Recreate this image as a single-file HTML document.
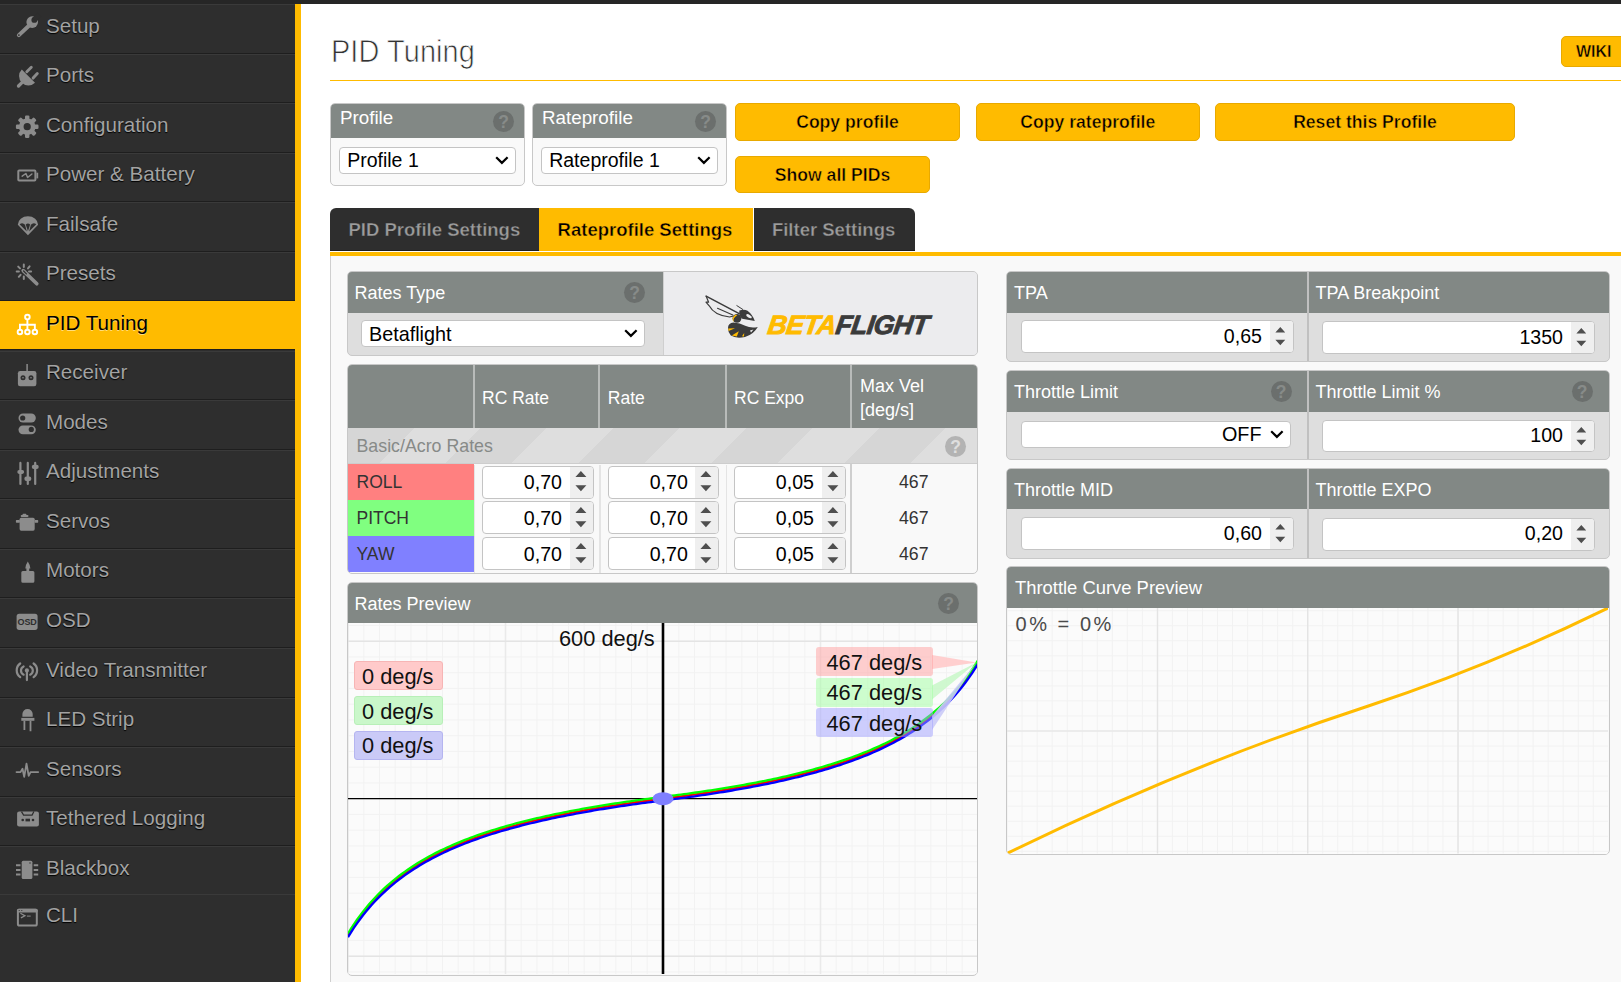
<!DOCTYPE html><html><head><meta charset="utf-8"><style>
*{box-sizing:border-box;margin:0;padding:0}
html,body{width:1621px;height:982px;overflow:hidden}
body{position:relative;background:#fff;font-family:"Liberation Sans",sans-serif;color:#333}
.a{position:absolute}
.side-item{position:absolute;left:0;width:295px;height:49.54px;border-top:1px solid #3a3a3a;border-bottom:1px solid #1e1e1e}
.side-item svg{position:absolute}
.box{position:absolute;border:1px solid #c8c8c8;border-radius:5px;background:#f9f9f9;overflow:hidden}
.hdr{position:absolute;left:0;right:0;top:0;background:#828885;color:#fff}
.help{position:absolute;width:21px;height:21px;border-radius:50%;background:#6b6f6d;color:#878b89;font-weight:bold;font-size:17.5px;line-height:23px;text-align:center}
.btn{position:absolute;background:#ffbb00;border:1px solid #e8a900;border-radius:5px;color:#000}
.sel-box{position:absolute;background:#fff;border:1px solid #c4c4c4;border-radius:4px;color:#000}
.tab{position:absolute;top:208px;height:42.7px}
.inp{position:absolute;background:#fff;border:1px solid #c4c4c4;border-radius:4px;height:32px;color:#000}
.sp{position:absolute;right:0;top:0;bottom:0;width:23px;background:#efefef;border-radius:0 3px 3px 0}
</style></head><body>
<div class="a" style="left:0;top:0;width:1621px;height:4px;background:#262626"></div>
<div class="a" style="left:0;top:4px;width:295px;height:978px;background:#2e2e2e"></div>
<div class="a" style="left:295px;top:4px;width:6px;height:978px;background:#ffbb00"></div>
<div class="side-item" style="top:4.00px"><svg style="left:16.4px;top:11.40px;overflow:visible" width="22" height="22" viewBox="0 0 22 22"><path d="M2.9 19.1 L14.5 8.2" stroke="#8c8c8c" stroke-width="4" stroke-linecap="round"/><circle cx="2.9" cy="19.1" r="0.9" fill="#2e2e2e"/><circle cx="16.2" cy="6.1" r="5.8" fill="#8c8c8c"/><circle cx="18.3" cy="3.9" r="2.9" fill="#2e2e2e"/><path d="M18.3 3.9 L23.5 -1.3" stroke="#2e2e2e" stroke-width="5.2"/></svg><div class="a" style="left:46px;top:10.50px;font-size:20.6px;line-height:20.6px;white-space:nowrap;color:#a3a3a3;text-shadow:0 1px 1px #000">Setup</div></div>
<div class="side-item" style="top:53.54px"><svg style="left:16.8px;top:11.76px;overflow:visible" width="22" height="22" viewBox="0 0 22 22"><path d="M4.8 3.5 L18 16.7 A9.3 9.3 0 0 1 4.8 3.5 Z" fill="#8c8c8c"/><path d="M9.8 5.8 L14.3 1.3 M16.1 12.1 L20.3 7.6" stroke="#8c8c8c" stroke-width="2.9" stroke-linecap="round"/><path d="M5.2 16.3 L1.5 20" stroke="#8c8c8c" stroke-width="3.3" stroke-linecap="round"/></svg><div class="a" style="left:46px;top:10.50px;font-size:20.6px;line-height:20.6px;white-space:nowrap;color:#a3a3a3;text-shadow:0 1px 1px #000">Ports</div></div>
<div class="side-item" style="top:103.08px"><svg style="left:16.2px;top:11.62px;overflow:visible" width="22" height="22" viewBox="0 0 22 22"><g fill="#8c8c8c"><circle cx="11.2" cy="10.7" r="8.3"/><rect x="9.0" y="-0.6" width="4.4" height="5" rx="1.2" transform="rotate(0 11.2 10.7)"/><rect x="9.0" y="-0.6" width="4.4" height="5" rx="1.2" transform="rotate(45 11.2 10.7)"/><rect x="9.0" y="-0.6" width="4.4" height="5" rx="1.2" transform="rotate(90 11.2 10.7)"/><rect x="9.0" y="-0.6" width="4.4" height="5" rx="1.2" transform="rotate(135 11.2 10.7)"/><rect x="9.0" y="-0.6" width="4.4" height="5" rx="1.2" transform="rotate(180 11.2 10.7)"/><rect x="9.0" y="-0.6" width="4.4" height="5" rx="1.2" transform="rotate(225 11.2 10.7)"/><rect x="9.0" y="-0.6" width="4.4" height="5" rx="1.2" transform="rotate(270 11.2 10.7)"/><rect x="9.0" y="-0.6" width="4.4" height="5" rx="1.2" transform="rotate(315 11.2 10.7)"/></g><circle cx="11.2" cy="10.7" r="3.6" fill="#2e2e2e"/></svg><div class="a" style="left:46px;top:10.50px;font-size:20.6px;line-height:20.6px;white-space:nowrap;color:#a3a3a3;text-shadow:0 1px 1px #000">Configuration</div></div>
<div class="side-item" style="top:152.62px"><svg style="left:16.8px;top:11.68px;overflow:visible" width="22" height="22" viewBox="0 0 22 22"><rect x="1.3" y="5.5" width="17.1" height="10" rx="0.8" stroke="#8c8c8c" stroke-width="2" fill="none"/><rect x="19.4" y="7.7" width="1.8" height="5.7" fill="#8c8c8c"/><path d="M5.2 11.2 L8.9 8.5 L10.6 12.5 L14.9 9" stroke="#8c8c8c" stroke-width="1.5" fill="none" stroke-linejoin="round" stroke-linecap="round"/></svg><div class="a" style="left:46px;top:10.50px;font-size:20.6px;line-height:20.6px;white-space:nowrap;color:#a3a3a3;text-shadow:0 1px 1px #000">Power &amp; Battery</div></div>
<div class="side-item" style="top:202.16px"><svg style="left:16.6px;top:11.44px;overflow:visible" width="22" height="22" viewBox="0 0 22 22"><path d="M0.8 9.7 A10.15 8.5 0 0 1 21.1 9.7 L10.95 20.2 Z" fill="#8c8c8c"/><g fill="#2e2e2e"><path d="M2.6 9.2 Q5.7 7.0 8.0 9.8 L9.8 16.6 Z"/><path d="M8.8 9.4 Q10.95 7.4 13.1 9.4 L10.95 16.2 Z"/><path d="M19.3 9.2 Q16.2 7.0 13.9 9.8 L12.1 16.6 Z"/></g></svg><div class="a" style="left:46px;top:10.50px;font-size:20.6px;line-height:20.6px;white-space:nowrap;color:#a3a3a3;text-shadow:0 1px 1px #000">Failsafe</div></div>
<div class="side-item" style="top:251.70px"><svg style="left:16.0px;top:11.60px;overflow:visible" width="22" height="22" viewBox="0 0 22 22"><path d="M7.2 6.6 L20.8 19.8" stroke="#8c8c8c" stroke-width="3.6" stroke-linecap="round"/><path d="M7.6 7.0 L10.4 9.8" stroke="#2e2e2e" stroke-width="1.2" stroke-linecap="round"/><g stroke="#8c8c8c" stroke-width="2" stroke-linecap="round"><path d="M7.8 0.6 V2.9 M7.8 12.6 V14.9 M0.7 7.5 H2.9 M13.0 7.5 H15.1 M2.2 2.6 L4.0 4.4 M13.6 2.4 L12.0 4.4 M2.8 12.8 L4.6 10.8"/></g></svg><div class="a" style="left:46px;top:10.50px;font-size:20.6px;line-height:20.6px;white-space:nowrap;color:#a3a3a3;text-shadow:0 1px 1px #000">Presets</div></div>
<div class="side-item" style="top:301.24px;background:#ffbb00;border-top-color:#ffbb00;border-bottom-color:#1e1e1e;height:48.7px"><svg style="left:16.9px;top:10.76px;overflow:visible" width="22" height="22" viewBox="0 0 22 22"><g stroke="#fff" stroke-width="1.9" fill="none"><circle cx="10.4" cy="4.1" r="2.3"/><path d="M10.4 6.4 V16.7 M2.95 16.7 V11.7 H17.85 V16.7"/><circle cx="2.95" cy="19" r="2.3"/><circle cx="10.4" cy="19" r="2.3"/><circle cx="17.85" cy="19" r="2.3"/></g></svg><div class="a" style="left:46px;top:10.50px;font-size:20.6px;line-height:20.6px;white-space:nowrap;color:#000;text-shadow:0 1px 0 rgba(255,255,255,.5)">PID Tuning</div></div>
<div class="side-item" style="top:350.78px"><svg style="left:16.4px;top:11.82px;overflow:visible" width="22" height="22" viewBox="0 0 22 22"><path d="M11.1 0 V7" stroke="#8c8c8c" stroke-width="1.5"/><rect x="1.9" y="7" width="18.5" height="15.2" rx="2.2" fill="#8c8c8c"/><circle cx="7" cy="13.8" r="2.5" fill="#2e2e2e"/><circle cx="15" cy="13.8" r="2.5" fill="#2e2e2e"/><circle cx="7" cy="13.8" r="0.8" fill="#8c8c8c"/><circle cx="15" cy="13.8" r="0.8" fill="#8c8c8c"/></svg><div class="a" style="left:46px;top:10.50px;font-size:20.6px;line-height:20.6px;white-space:nowrap;color:#a3a3a3;text-shadow:0 1px 1px #000">Receiver</div></div>
<div class="side-item" style="top:400.32px"><svg style="left:16.4px;top:9.28px;overflow:visible" width="22" height="22" viewBox="0 0 22 22"><rect x="2.5" y="2.4" width="17.3" height="9.1" rx="4.55" fill="#8c8c8c"/><circle cx="6.7" cy="7" r="2.6" fill="#2e2e2e"/><rect x="2.5" y="14.4" width="17.3" height="8.8" rx="4.4" fill="#8c8c8c"/><circle cx="15.3" cy="18.4" r="2.6" fill="#2e2e2e"/></svg><div class="a" style="left:46px;top:10.50px;font-size:20.6px;line-height:20.6px;white-space:nowrap;color:#a3a3a3;text-shadow:0 1px 1px #000">Modes</div></div>
<div class="side-item" style="top:449.86px"><svg style="left:16.6px;top:10.14px;overflow:visible" width="22" height="22" viewBox="0 0 22 22"><g stroke="#8c8c8c" stroke-width="2.2" stroke-linecap="round"><path d="M3.4 1.9 V22.9 M10.8 1.9 V22.9 M18.2 1.9 V22.9"/></g><g fill="#8c8c8c"><rect x="0.3" y="9.1" width="6.8" height="3.8" rx="1.8"/><rect x="7.4" y="15.4" width="6.9" height="4.6" rx="2"/><rect x="14.8" y="3.7" width="6.9" height="4.3" rx="2"/></g></svg><div class="a" style="left:46px;top:10.50px;font-size:20.6px;line-height:20.6px;white-space:nowrap;color:#a3a3a3;text-shadow:0 1px 1px #000">Adjustments</div></div>
<div class="side-item" style="top:499.40px"><svg style="left:16.4px;top:11.80px;overflow:visible" width="22" height="22" viewBox="0 0 22 22"><g fill="#8c8c8c"><rect x="6.5" y="1.7" width="3.9" height="1.8" rx="0.8"/><rect x="4.7" y="3.1" width="7.8" height="1.9" rx="0.9"/><rect x="3.6" y="5.7" width="15.1" height="13" rx="1.6"/><rect x="-0.1" y="8.1" width="4" height="2.6" rx="0.6"/><rect x="18.5" y="8.1" width="3.7" height="2.6" rx="0.6"/></g></svg><div class="a" style="left:46px;top:10.50px;font-size:20.6px;line-height:20.6px;white-space:nowrap;color:#a3a3a3;text-shadow:0 1px 1px #000">Servos</div></div>
<div class="side-item" style="top:548.94px"><svg style="left:20.6px;top:12.16px;overflow:visible" width="22" height="22" viewBox="0 0 22 22"><path d="M6.8 -0.4 Q4.6 2.8 4.3 6.5 H5.4 V9 H1.8 Q0.3 9 0.3 10.5 V19.2 Q0.3 20.7 1.8 20.7 H11.9 Q13.4 20.7 13.4 19.2 V10.5 Q13.4 9 11.9 9 H8.2 V6.5 H9.4 Q9 2.8 6.8 -0.4 Z" fill="#8c8c8c"/></svg><div class="a" style="left:46px;top:10.50px;font-size:20.6px;line-height:20.6px;white-space:nowrap;color:#a3a3a3;text-shadow:0 1px 1px #000">Motors</div></div>
<div class="side-item" style="top:598.48px"><svg style="left:16.4px;top:11.62px;overflow:visible" width="22" height="22" viewBox="0 0 22 22"><rect x="0.6" y="2.8" width="21" height="16.1" rx="2.6" fill="#8c8c8c"/><text x="11.05" y="14.1" font-family="Liberation Sans" font-weight="bold" font-size="9" letter-spacing="-0.2" fill="#2e2e2e" text-anchor="middle">OSD</text></svg><div class="a" style="left:46px;top:10.50px;font-size:20.6px;line-height:20.6px;white-space:nowrap;color:#a3a3a3;text-shadow:0 1px 1px #000">OSD</div></div>
<div class="side-item" style="top:648.02px"><svg style="left:16.4px;top:12.88px;overflow:visible" width="22" height="22" viewBox="0 0 22 22"><g stroke="#8c8c8c" stroke-width="2.2" fill="none" stroke-linecap="round"><path d="M10.9 8.4 V18.1"/><path d="M7.6 4.4 A4.6 4.6 0 0 0 7.6 12.7 M14.2 4.4 A4.6 4.6 0 0 1 14.2 12.7"/><path d="M4.2 1.5 A8.45 8.45 0 0 0 4.2 15.2 M17.6 1.5 A8.45 8.45 0 0 1 17.6 15.2"/></g><circle cx="10.9" cy="8.4" r="2.1" fill="#8c8c8c"/></svg><div class="a" style="left:46px;top:10.50px;font-size:20.6px;line-height:20.6px;white-space:nowrap;color:#a3a3a3;text-shadow:0 1px 1px #000">Video Transmitter</div></div>
<div class="side-item" style="top:697.56px"><svg style="left:20.6px;top:9.54px;overflow:visible" width="22" height="22" viewBox="0 0 22 22"><path d="M1.4 8.8 V6.1 A5.15 5.1 0 0 1 11.7 6.1 V8.8 Z" fill="#8c8c8c"/><rect x="0.3" y="9.9" width="13.1" height="2.9" fill="#8c8c8c"/><path d="M3.4 12.8 V21.9 M9.5 12.8 V23.3" stroke="#8c8c8c" stroke-width="1.8"/></svg><div class="a" style="left:46px;top:10.50px;font-size:20.6px;line-height:20.6px;white-space:nowrap;color:#a3a3a3;text-shadow:0 1px 1px #000">LED Strip</div></div>
<div class="side-item" style="top:747.10px"><svg style="left:16.4px;top:15.40px;overflow:visible" width="22" height="22" viewBox="0 0 22 22"><path d="M0.5 9.1 H4.5 L6.5 5.8 L8.2 13.8 L10.5 0.6 L12.7 12.9 L14.5 9.1 H22.2" stroke="#8c8c8c" stroke-width="1.8" fill="none" stroke-linejoin="round" stroke-linecap="round"/></svg><div class="a" style="left:46px;top:10.50px;font-size:20.6px;line-height:20.6px;white-space:nowrap;color:#a3a3a3;text-shadow:0 1px 1px #000">Sensors</div></div>
<div class="side-item" style="top:796.64px"><svg style="left:16.6px;top:13.66px;overflow:visible" width="22" height="22" viewBox="0 0 22 22"><rect x="0.1" y="0.6" width="21.8" height="15" rx="2" fill="#8c8c8c"/><path d="M4.5 0.6 L6.6 4.1 H15.1 L16.9 0.6" stroke="#2e2e2e" stroke-width="1.2" fill="none"/><g fill="#2e2e2e"><circle cx="5.7" cy="9" r="1.3"/><circle cx="16" cy="9" r="1.3"/><rect x="8.5" y="7.7" width="4.5" height="2.7"/></g></svg><div class="a" style="left:46px;top:10.50px;font-size:20.6px;line-height:20.6px;white-space:nowrap;color:#a3a3a3;text-shadow:0 1px 1px #000">Tethered Logging</div></div>
<div class="side-item" style="top:846.18px;border-bottom:none"><svg style="left:16.4px;top:12.42px;overflow:visible" width="22" height="22" viewBox="0 0 22 22"><rect x="5.7" y="0.7" width="10.7" height="18.4" rx="1.5" fill="#8c8c8c"/><circle cx="14" cy="3" r="0.7" fill="#2e2e2e"/><g stroke="#8c8c8c" stroke-width="2"><path d="M0 5.3 H4.5 M0 10 H4.5 M0 14.4 H4.5 M17.7 5.3 H22.2 M17.7 10 H22.2 M17.7 14.4 H22.2"/></g></svg><div class="a" style="left:46px;top:10.50px;font-size:20.6px;line-height:20.6px;white-space:nowrap;color:#a3a3a3;text-shadow:0 1px 1px #000">Blackbox</div></div>
<div class="side-item" style="top:894.00px;border-bottom:none;height:88px"><svg style="left:16.2px;top:12.90px;overflow:visible" width="22" height="22" viewBox="0 0 22 22"><rect x="1.9" y="1.7" width="18.9" height="15.9" rx="1.6" stroke="#8c8c8c" stroke-width="2" fill="none"/><rect x="0.9" y="0.7" width="20.9" height="3.7" rx="1.6" fill="#8c8c8c"/><circle cx="3.2" cy="2.5" r="0.6" fill="#2e2e2e"/><circle cx="5.8" cy="2.5" r="0.6" fill="#2e2e2e"/><path d="M4.4 5.2 L8.9 7.8 L4.9 9.8" stroke="#8c8c8c" stroke-width="1.3" fill="none"/><path d="M10.9 8.1 H14.7" stroke="#8c8c8c" stroke-width="1"/></svg><div class="a" style="left:46px;top:10.20px;font-size:20.6px;line-height:20.6px;white-space:nowrap;color:#a3a3a3;text-shadow:0 1px 1px #000">CLI</div></div>
<div class="a" style="left:330.8px;top:36.05px;font-size:31.6px;line-height:31.6px;white-space:nowrap;color:#333;-webkit-text-stroke:0.75px #fff;transform:scaleX(0.915);transform-origin:0 0;letter-spacing:0.1px">PID Tuning</div>
<div class="a" style="left:330px;top:80px;width:1291px;height:1px;background:#ffbb00"></div>
<div class="btn" style="left:1561px;top:36px;width:80px;height:30.5px"><div class="a" style="left:14px;top:6.80px;font-size:16px;line-height:16px;white-space:nowrap;font-weight:bold;-webkit-text-stroke:0.4px #ffbb00">WIKI</div></div>
<div class="box" style="left:330px;top:103px;width:195px;height:83px"><div class="hdr" style="height:34px"><div class="a" style="left:9px;top:5.00px;font-size:18.8px;line-height:18.8px;white-space:nowrap;">Profile</div><div class="help" style="left:162px;top:6.6px">?</div></div><div class="sel-box" style="left:8.2px;top:43.2px;width:176.5px;height:26.4px"><div class="a" style="left:7px;top:2.50px;font-size:19.5px;line-height:19.5px;white-space:nowrap;">Profile 1</div><svg class="a" style="left:154.9px;top:7.8px" width="14" height="9" viewBox="0 0 14 9"><path d="M1.2 1.2 L6.9 6.9 L12.6 1.2" stroke="#000" stroke-width="2.2" fill="none"/></svg></div></div>
<div class="box" style="left:532px;top:103px;width:195px;height:83px"><div class="hdr" style="height:34px"><div class="a" style="left:9px;top:5.00px;font-size:18.8px;line-height:18.8px;white-space:nowrap;">Rateprofile</div><div class="help" style="left:162px;top:6.6px">?</div></div><div class="sel-box" style="left:8.2px;top:43.2px;width:176.5px;height:26.4px"><div class="a" style="left:7px;top:2.50px;font-size:19.5px;line-height:19.5px;white-space:nowrap;">Rateprofile 1</div><svg class="a" style="left:154.9px;top:7.8px" width="14" height="9" viewBox="0 0 14 9"><path d="M1.2 1.2 L6.9 6.9 L12.6 1.2" stroke="#000" stroke-width="2.2" fill="none"/></svg></div></div>
<div class="btn" style="left:735px;top:103px;width:225px;height:38px"><div class="a" style="left:0;right:0;top:9.55px;font-size:17.6px;line-height:17.6px;text-align:center;font-weight:bold;white-space:nowrap;-webkit-text-stroke:0.45px #ffbb00">Copy profile</div></div>
<div class="btn" style="left:975.5px;top:103px;width:224.5px;height:38px"><div class="a" style="left:0;right:0;top:9.55px;font-size:17.6px;line-height:17.6px;text-align:center;font-weight:bold;white-space:nowrap;-webkit-text-stroke:0.45px #ffbb00">Copy rateprofile</div></div>
<div class="btn" style="left:1215px;top:103px;width:300px;height:38px"><div class="a" style="left:0;right:0;top:9.55px;font-size:17.6px;line-height:17.6px;text-align:center;font-weight:bold;white-space:nowrap;-webkit-text-stroke:0.45px #ffbb00">Reset this Profile</div></div>
<div class="btn" style="left:735px;top:156px;width:195px;height:37px"><div class="a" style="left:0;right:0;top:9.50px;font-size:17.6px;line-height:17.6px;text-align:center;font-weight:bold;white-space:nowrap;-webkit-text-stroke:0.45px #ffbb00">Show all PIDs</div></div>
<div class="tab" style="left:330px;width:208.5px;background:#2e2e2e;border-radius:6px 0 0 0;border-bottom:1px solid #1e1e1e"><div class="a" style="left:18.5px;top:12.85px;font-size:18.5px;line-height:18.5px;white-space:nowrap;font-weight:bold;color:#9c9c9c;-webkit-text-stroke:0.35px #2e2e2e">PID Profile Settings</div></div>
<div class="tab" style="left:539px;width:213.5px;background:#ffbb00"><div class="a" style="left:18.6px;top:12.85px;font-size:18.5px;line-height:18.5px;white-space:nowrap;font-weight:bold;color:#000;-webkit-text-stroke:0.4px #ffbb00">Rateprofile Settings</div></div>
<div class="tab" style="left:753.5px;width:161.3px;background:#2e2e2e;border-radius:0 6px 0 0;border-bottom:1px solid #1e1e1e"><div class="a" style="left:18.4px;top:12.85px;font-size:18.5px;line-height:18.5px;white-space:nowrap;font-weight:bold;color:#9c9c9c;-webkit-text-stroke:0.35px #2e2e2e">Filter Settings</div></div>
<div class="a" style="left:330px;top:252px;width:1291px;height:4px;background:#ffbb00"></div>
<div class="a" style="left:330px;top:256px;width:1291px;height:726px;background:#f9f9f9;border-left:1px solid #cfcfcf"></div>
<div class="box" style="left:346.5px;top:271px;width:631.5px;height:85px;background:#dedede"><div class="hdr" style="width:315px;height:41px"><div class="a" style="left:7px;top:11.50px;font-size:18px;line-height:18px;white-space:nowrap;">Rates Type</div><div class="help" style="left:276.5px;top:10px">?</div></div><div class="sel-box" style="left:13.5px;top:48.2px;width:284px;height:27px"><div class="a" style="left:7px;top:3.40px;font-size:19.8px;line-height:19.8px;white-space:nowrap;">Betaflight</div><svg class="a" style="left:262px;top:7.9px" width="14" height="9" viewBox="0 0 14 9"><path d="M1.2 1.2 L6.9 6.9 L12.6 1.2" stroke="#000" stroke-width="2.2" fill="none"/></svg></div><div class="a" style="left:315px;top:0;width:316px;height:85px;background:#ececee;border-left:1px solid #cfcfcf"></div></div>
<svg class="a" style="left:700px;top:290px" width="60" height="52" viewBox="0 0 60 52"><path d="M6.1 6.1 L39.2 23.6" stroke="#3b3b3b" stroke-width="1.5" stroke-linecap="round"/><path d="M6.1 6.1 L8.6 12.2 L6 12.2 L9.2 15.8 Q14.3 25.5 29.6 27 L33.5 26" stroke="#3b3b3b" stroke-width="1.2" fill="none" stroke-linejoin="round"/><path d="M17.5 18.3 L32.8 24.9" stroke="#3b3b3b" stroke-width="1.1" stroke-linecap="round"/><path d="M36.5 15.4 L43 19.6" stroke="#3b3b3b" stroke-width="1" /><path d="M39.4 20.6 Q44 19 47.5 20.8 Q52.5 24.5 54.8 30.9 Q47 29.8 42.2 28.8 Q38.6 26 39.4 20.6 Z" fill="#3b3b3b"/><ellipse cx="49" cy="26.2" rx="3.1" ry="1.5" transform="rotate(28 49 26.2)" fill="#ececee"/><circle cx="37" cy="28.3" r="4.4" fill="#3b3b3b"/><path d="M35.6 24.4 Q30.6 27.5 33.6 32.2 Q32.6 27.8 37.2 25.2 Z" fill="#ffbb00"/><path d="M28 38 Q28 33 33.5 32.5 Q40 33 45.2 35.8 Q51 38.6 57.8 37 Q53.5 44.5 45 47 Q36 48.8 30.8 45.6 Q28 42.4 28 38 Z" fill="#3b3b3b"/><path d="M28.2 38.6 L35 38.2 L28.6 41 Z M31.8 45.6 L38.8 41.2 L36.8 46.6 Z M42 46.2 L44.2 43 L44 46.4 Z" fill="#ffbb00"/><path d="M50 40.5 L53.5 39.6 L51 42.5 Z" fill="#ececee"/></svg>
<div class="a" style="left:766px;top:311.70px;font-size:26.6px;line-height:26.6px;white-space:nowrap;font-weight:bold;font-style:italic;letter-spacing:-0.6px;transform:skewX(-8deg);transform-origin:0 100%"><span style="color:#ffbb00;-webkit-text-stroke:0.9px #ffbb00">BETA</span><span style="color:#3b3b3b;-webkit-text-stroke:0.9px #3b3b3b">FLIGHT</span></div>
<div class="box" style="left:346.5px;top:364px;width:631.5px;height:210px;background:#f9f9f9"><div class="hdr" style="height:63px"></div><div class="a" style="left:125.0px;top:0;width:2px;height:63px;background:#b8bbb9"></div><div class="a" style="left:134.5px;top:24.55px;font-size:17.5px;line-height:17.5px;white-space:nowrap;color:#fff">RC Rate</div><div class="a" style="left:250.79999999999995px;top:0;width:2px;height:63px;background:#b8bbb9"></div><div class="a" style="left:260.29999999999995px;top:24.55px;font-size:17.5px;line-height:17.5px;white-space:nowrap;color:#fff">Rate</div><div class="a" style="left:377.0px;top:0;width:2px;height:63px;background:#b8bbb9"></div><div class="a" style="left:386.5px;top:24.55px;font-size:17.5px;line-height:17.5px;white-space:nowrap;color:#fff">RC Expo</div><div class="a" style="left:502.5px;top:0;width:2px;height:63px;background:#b8bbb9"></div><div class="a" style="left:502.5px;top:99px;width:1.6px;height:110px;background:#cfcfcf"></div><div class="a" style="left:512.5px;top:11.50px;font-size:18px;line-height:18px;white-space:nowrap;color:#fff">Max Vel</div><div class="a" style="left:512.5px;top:35.60px;font-size:18px;line-height:18px;white-space:nowrap;color:#fff">[deg/s]</div><div class="a" style="left:0;top:98px;width:631px;height:1px;background:#cdcdcd"></div><div class="a" style="left:0;top:63px;width:631px;height:35px;background:repeating-linear-gradient(135deg,#d6d6d6 0 46.8px,#dedede 46.8px 93.9px);"></div><div class="a" style="left:9px;top:72.60px;font-size:17.8px;line-height:17.8px;white-space:nowrap;color:#878a88">Basic/Acro Rates</div><div class="help" style="left:597.5px;top:71px;background:#b3b3b3;color:#dedede">?</div><div class="a" style="left:0;top:99.0px;width:126px;height:36px;background:#ff8080"></div><div class="a" style="left:9px;top:108.55px;font-size:17.5px;line-height:17.5px;white-space:nowrap;color:#333">ROLL</div><div class="inp" style="left:134.5px;top:100.5px;width:111.5px;height:33px"><div class="a" style="right:30.5px;top:6.10px;font-size:19.6px;line-height:19.6px;white-space:nowrap;">0,70</div><div class="sp"><svg class="a" style="left:5px;top:4.6px;overflow:visible" width="12" height="21" viewBox="0 0 12 21"><g transform="scale(1.0)"><path d="M0.4 6.1 L5.9 0 L11.4 6.1 Z M0.4 14.2 L5.9 20.3 L11.4 14.2 Z" fill="#4f4f4f"/></g></svg></div></div><div class="inp" style="left:260.29999999999995px;top:100.5px;width:111.5px;height:33px"><div class="a" style="right:30.5px;top:6.10px;font-size:19.6px;line-height:19.6px;white-space:nowrap;">0,70</div><div class="sp"><svg class="a" style="left:5px;top:4.6px;overflow:visible" width="12" height="21" viewBox="0 0 12 21"><g transform="scale(1.0)"><path d="M0.4 6.1 L5.9 0 L11.4 6.1 Z M0.4 14.2 L5.9 20.3 L11.4 14.2 Z" fill="#4f4f4f"/></g></svg></div></div><div class="inp" style="left:386.5px;top:100.5px;width:111.5px;height:33px"><div class="a" style="right:30.5px;top:6.10px;font-size:19.6px;line-height:19.6px;white-space:nowrap;">0,05</div><div class="sp"><svg class="a" style="left:5px;top:4.6px;overflow:visible" width="12" height="21" viewBox="0 0 12 21"><g transform="scale(1.0)"><path d="M0.4 6.1 L5.9 0 L11.4 6.1 Z M0.4 14.2 L5.9 20.3 L11.4 14.2 Z" fill="#4f4f4f"/></g></svg></div></div><div class="a" style="left:551.5px;top:108.65px;font-size:17.7px;line-height:17.7px;white-space:nowrap;color:#333">467</div><div class="a" style="left:0;top:134.95px;width:126px;height:36px;background:#80ff80"></div><div class="a" style="left:9px;top:144.55px;font-size:17.5px;line-height:17.5px;white-space:nowrap;color:#333">PITCH</div><div class="inp" style="left:134.5px;top:136.45px;width:111.5px;height:33px"><div class="a" style="right:30.5px;top:6.15px;font-size:19.6px;line-height:19.6px;white-space:nowrap;">0,70</div><div class="sp"><svg class="a" style="left:5px;top:4.6px;overflow:visible" width="12" height="21" viewBox="0 0 12 21"><g transform="scale(1.0)"><path d="M0.4 6.1 L5.9 0 L11.4 6.1 Z M0.4 14.2 L5.9 20.3 L11.4 14.2 Z" fill="#4f4f4f"/></g></svg></div></div><div class="inp" style="left:260.29999999999995px;top:136.45px;width:111.5px;height:33px"><div class="a" style="right:30.5px;top:6.15px;font-size:19.6px;line-height:19.6px;white-space:nowrap;">0,70</div><div class="sp"><svg class="a" style="left:5px;top:4.6px;overflow:visible" width="12" height="21" viewBox="0 0 12 21"><g transform="scale(1.0)"><path d="M0.4 6.1 L5.9 0 L11.4 6.1 Z M0.4 14.2 L5.9 20.3 L11.4 14.2 Z" fill="#4f4f4f"/></g></svg></div></div><div class="inp" style="left:386.5px;top:136.45px;width:111.5px;height:33px"><div class="a" style="right:30.5px;top:6.15px;font-size:19.6px;line-height:19.6px;white-space:nowrap;">0,05</div><div class="sp"><svg class="a" style="left:5px;top:4.6px;overflow:visible" width="12" height="21" viewBox="0 0 12 21"><g transform="scale(1.0)"><path d="M0.4 6.1 L5.9 0 L11.4 6.1 Z M0.4 14.2 L5.9 20.3 L11.4 14.2 Z" fill="#4f4f4f"/></g></svg></div></div><div class="a" style="left:551.5px;top:144.65px;font-size:17.7px;line-height:17.7px;white-space:nowrap;color:#333">467</div><div class="a" style="left:0;top:170.9px;width:126px;height:36px;background:#8080ff"></div><div class="a" style="left:9px;top:180.55px;font-size:17.5px;line-height:17.5px;white-space:nowrap;color:#333">YAW</div><div class="inp" style="left:134.5px;top:172.4px;width:111.5px;height:33px"><div class="a" style="right:30.5px;top:6.20px;font-size:19.6px;line-height:19.6px;white-space:nowrap;">0,70</div><div class="sp"><svg class="a" style="left:5px;top:4.6px;overflow:visible" width="12" height="21" viewBox="0 0 12 21"><g transform="scale(1.0)"><path d="M0.4 6.1 L5.9 0 L11.4 6.1 Z M0.4 14.2 L5.9 20.3 L11.4 14.2 Z" fill="#4f4f4f"/></g></svg></div></div><div class="inp" style="left:260.29999999999995px;top:172.4px;width:111.5px;height:33px"><div class="a" style="right:30.5px;top:6.20px;font-size:19.6px;line-height:19.6px;white-space:nowrap;">0,70</div><div class="sp"><svg class="a" style="left:5px;top:4.6px;overflow:visible" width="12" height="21" viewBox="0 0 12 21"><g transform="scale(1.0)"><path d="M0.4 6.1 L5.9 0 L11.4 6.1 Z M0.4 14.2 L5.9 20.3 L11.4 14.2 Z" fill="#4f4f4f"/></g></svg></div></div><div class="inp" style="left:386.5px;top:172.4px;width:111.5px;height:33px"><div class="a" style="right:30.5px;top:6.20px;font-size:19.6px;line-height:19.6px;white-space:nowrap;">0,05</div><div class="sp"><svg class="a" style="left:5px;top:4.6px;overflow:visible" width="12" height="21" viewBox="0 0 12 21"><g transform="scale(1.0)"><path d="M0.4 6.1 L5.9 0 L11.4 6.1 Z M0.4 14.2 L5.9 20.3 L11.4 14.2 Z" fill="#4f4f4f"/></g></svg></div></div><div class="a" style="left:551.5px;top:180.65px;font-size:17.7px;line-height:17.7px;white-space:nowrap;color:#333">467</div><div class="a" style="left:126.0px;top:99.5px;width:1.5px;height:109px;background:#e4e4e4"></div><div class="a" style="left:251.79999999999995px;top:99.5px;width:1.5px;height:109px;background:#e4e4e4"></div><div class="a" style="left:378.0px;top:99.5px;width:1.5px;height:109px;background:#e4e4e4"></div></div>
<div class="box" style="left:346.5px;top:581.5px;width:631.5px;height:394px;background:#f9f9f9"><div class="hdr" style="height:40.2px"><div class="a" style="left:7px;top:12.00px;font-size:18px;line-height:18px;white-space:nowrap;">Rates Preview</div><div class="help" style="left:590.5px;top:10px">?</div></div><svg class="a" style="left:0;top:40.2px;background:#fbfbfb" width="630" height="351.4" viewBox="0 0 630 351.4"><path d="M0.0 0 V351.4" stroke="#f2f2f2" stroke-width="1"/><path d="M15.8 0 V351.4" stroke="#f2f2f2" stroke-width="1"/><path d="M31.5 0 V351.4" stroke="#f2f2f2" stroke-width="1"/><path d="M47.2 0 V351.4" stroke="#f2f2f2" stroke-width="1"/><path d="M63.0 0 V351.4" stroke="#f2f2f2" stroke-width="1"/><path d="M78.8 0 V351.4" stroke="#f2f2f2" stroke-width="1"/><path d="M94.5 0 V351.4" stroke="#f2f2f2" stroke-width="1"/><path d="M110.2 0 V351.4" stroke="#f2f2f2" stroke-width="1"/><path d="M126.0 0 V351.4" stroke="#f2f2f2" stroke-width="1"/><path d="M141.8 0 V351.4" stroke="#f2f2f2" stroke-width="1"/><path d="M157.5 0 V351.4" stroke="#f2f2f2" stroke-width="1"/><path d="M173.2 0 V351.4" stroke="#f2f2f2" stroke-width="1"/><path d="M189.0 0 V351.4" stroke="#f2f2f2" stroke-width="1"/><path d="M204.8 0 V351.4" stroke="#f2f2f2" stroke-width="1"/><path d="M220.5 0 V351.4" stroke="#f2f2f2" stroke-width="1"/><path d="M236.2 0 V351.4" stroke="#f2f2f2" stroke-width="1"/><path d="M252.0 0 V351.4" stroke="#f2f2f2" stroke-width="1"/><path d="M267.8 0 V351.4" stroke="#f2f2f2" stroke-width="1"/><path d="M283.5 0 V351.4" stroke="#f2f2f2" stroke-width="1"/><path d="M299.2 0 V351.4" stroke="#f2f2f2" stroke-width="1"/><path d="M315.0 0 V351.4" stroke="#f2f2f2" stroke-width="1"/><path d="M330.8 0 V351.4" stroke="#f2f2f2" stroke-width="1"/><path d="M346.5 0 V351.4" stroke="#f2f2f2" stroke-width="1"/><path d="M362.2 0 V351.4" stroke="#f2f2f2" stroke-width="1"/><path d="M378.0 0 V351.4" stroke="#f2f2f2" stroke-width="1"/><path d="M393.8 0 V351.4" stroke="#f2f2f2" stroke-width="1"/><path d="M409.5 0 V351.4" stroke="#f2f2f2" stroke-width="1"/><path d="M425.2 0 V351.4" stroke="#f2f2f2" stroke-width="1"/><path d="M441.0 0 V351.4" stroke="#f2f2f2" stroke-width="1"/><path d="M456.8 0 V351.4" stroke="#f2f2f2" stroke-width="1"/><path d="M472.5 0 V351.4" stroke="#f2f2f2" stroke-width="1"/><path d="M488.2 0 V351.4" stroke="#f2f2f2" stroke-width="1"/><path d="M504.0 0 V351.4" stroke="#f2f2f2" stroke-width="1"/><path d="M519.8 0 V351.4" stroke="#f2f2f2" stroke-width="1"/><path d="M535.5 0 V351.4" stroke="#f2f2f2" stroke-width="1"/><path d="M551.2 0 V351.4" stroke="#f2f2f2" stroke-width="1"/><path d="M567.0 0 V351.4" stroke="#f2f2f2" stroke-width="1"/><path d="M582.8 0 V351.4" stroke="#f2f2f2" stroke-width="1"/><path d="M598.5 0 V351.4" stroke="#f2f2f2" stroke-width="1"/><path d="M614.2 0 V351.4" stroke="#f2f2f2" stroke-width="1"/><path d="M630.0 0 V351.4" stroke="#f2f2f2" stroke-width="1"/><path d="M0 2.4 H630" stroke="#f2f2f2" stroke-width="1"/><path d="M0 18.2 H630" stroke="#f2f2f2" stroke-width="1"/><path d="M0 33.9 H630" stroke="#f2f2f2" stroke-width="1"/><path d="M0 49.7 H630" stroke="#f2f2f2" stroke-width="1"/><path d="M0 65.4 H630" stroke="#f2f2f2" stroke-width="1"/><path d="M0 81.2 H630" stroke="#f2f2f2" stroke-width="1"/><path d="M0 96.9 H630" stroke="#f2f2f2" stroke-width="1"/><path d="M0 112.7 H630" stroke="#f2f2f2" stroke-width="1"/><path d="M0 128.4 H630" stroke="#f2f2f2" stroke-width="1"/><path d="M0 144.2 H630" stroke="#f2f2f2" stroke-width="1"/><path d="M0 159.9 H630" stroke="#f2f2f2" stroke-width="1"/><path d="M0 175.7 H630" stroke="#f2f2f2" stroke-width="1"/><path d="M0 191.4 H630" stroke="#f2f2f2" stroke-width="1"/><path d="M0 207.2 H630" stroke="#f2f2f2" stroke-width="1"/><path d="M0 222.9 H630" stroke="#f2f2f2" stroke-width="1"/><path d="M0 238.7 H630" stroke="#f2f2f2" stroke-width="1"/><path d="M0 254.4 H630" stroke="#f2f2f2" stroke-width="1"/><path d="M0 270.2 H630" stroke="#f2f2f2" stroke-width="1"/><path d="M0 285.9 H630" stroke="#f2f2f2" stroke-width="1"/><path d="M0 301.7 H630" stroke="#f2f2f2" stroke-width="1"/><path d="M0 317.4 H630" stroke="#f2f2f2" stroke-width="1"/><path d="M0 333.2 H630" stroke="#f2f2f2" stroke-width="1"/><path d="M0 348.9 H630" stroke="#f2f2f2" stroke-width="1"/><path d="M0.0 0 V351.4" stroke="#eaeaea" stroke-width="1.6"/><path d="M157.5 0 V351.4" stroke="#eaeaea" stroke-width="1.6"/><path d="M472.5 0 V351.4" stroke="#eaeaea" stroke-width="1.6"/><path d="M630.0 0 V351.4" stroke="#eaeaea" stroke-width="1.6"/><path d="M0 18.2 H630" stroke="#e4e4e4" stroke-width="1.6"/><path d="M0 333.2 H630" stroke="#e4e4e4" stroke-width="1.6"/><path d="M315.0 0 V351.4" stroke="#000" stroke-width="2.6"/><path d="M0 175.7 H630" stroke="#000" stroke-width="1.2"/><path d="M0.0,312.36 L3.0,307.50 L6.0,302.91 L9.0,298.55 L12.0,294.41 L15.0,290.47 L18.0,286.72 L21.0,283.15 L24.0,279.74 L27.0,276.48 L30.0,273.36 L33.0,270.37 L36.0,267.51 L39.0,264.77 L42.0,262.13 L45.0,259.59 L48.0,257.16 L51.0,254.81 L54.0,252.55 L57.0,250.37 L60.0,248.26 L63.0,246.23 L66.0,244.27 L69.0,242.37 L72.0,240.53 L75.0,238.76 L78.0,237.04 L81.0,235.37 L84.0,233.75 L87.0,232.18 L90.0,230.66 L93.0,229.18 L96.0,227.74 L99.0,226.35 L102.0,224.99 L105.0,223.67 L108.0,222.38 L111.0,221.13 L114.0,219.91 L117.0,218.72 L120.0,217.56 L123.0,216.43 L126.0,215.32 L129.0,214.25 L132.0,213.19 L135.0,212.17 L138.0,211.16 L141.0,210.18 L144.0,209.23 L147.0,208.29 L150.0,207.37 L153.0,206.47 L156.0,205.59 L159.0,204.73 L162.0,203.89 L165.0,203.07 L168.0,202.26 L171.0,201.47 L174.0,200.69 L177.0,199.93 L180.0,199.18 L183.0,198.45 L186.0,197.73 L189.0,197.02 L192.0,196.33 L195.0,195.65 L198.0,194.98 L201.0,194.32 L204.0,193.68 L207.0,193.04 L210.0,192.42 L213.0,191.81 L216.0,191.21 L219.0,190.61 L222.0,190.03 L225.0,189.46 L228.0,188.89 L231.0,188.34 L234.0,187.79 L237.0,187.26 L240.0,186.73 L243.0,186.21 L246.0,185.69 L249.0,185.19 L252.0,184.69 L255.0,184.20 L258.0,183.71 L261.0,183.24 L264.0,182.77 L267.0,182.31 L270.0,181.85 L273.0,181.40 L276.0,180.96 L279.0,180.52 L282.0,180.09 L285.0,179.66 L288.0,179.24 L291.0,178.83 L294.0,178.42 L297.0,178.01 L300.0,177.62 L303.0,177.22 L306.0,176.83 L309.0,176.45 L312.0,176.07 L315.0,175.70 L318.0,175.33 L321.0,174.95 L324.0,174.57 L327.0,174.18 L330.0,173.78 L333.0,173.39 L336.0,172.98 L339.0,172.57 L342.0,172.16 L345.0,171.74 L348.0,171.31 L351.0,170.88 L354.0,170.44 L357.0,170.00 L360.0,169.55 L363.0,169.09 L366.0,168.63 L369.0,168.16 L372.0,167.69 L375.0,167.20 L378.0,166.71 L381.0,166.21 L384.0,165.71 L387.0,165.19 L390.0,164.67 L393.0,164.14 L396.0,163.61 L399.0,163.06 L402.0,162.51 L405.0,161.94 L408.0,161.37 L411.0,160.79 L414.0,160.19 L417.0,159.59 L420.0,158.98 L423.0,158.36 L426.0,157.72 L429.0,157.08 L432.0,156.42 L435.0,155.75 L438.0,155.07 L441.0,154.38 L444.0,153.67 L447.0,152.95 L450.0,152.22 L453.0,151.47 L456.0,150.71 L459.0,149.93 L462.0,149.14 L465.0,148.33 L468.0,147.51 L471.0,146.67 L474.0,145.81 L477.0,144.93 L480.0,144.03 L483.0,143.11 L486.0,142.17 L489.0,141.22 L492.0,140.24 L495.0,139.23 L498.0,138.21 L501.0,137.15 L504.0,136.08 L507.0,134.97 L510.0,133.84 L513.0,132.68 L516.0,131.49 L519.0,130.27 L522.0,129.02 L525.0,127.73 L528.0,126.41 L531.0,125.05 L534.0,123.66 L537.0,122.22 L540.0,120.74 L543.0,119.22 L546.0,117.65 L549.0,116.03 L552.0,114.36 L555.0,112.64 L558.0,110.87 L561.0,109.03 L564.0,107.13 L567.0,105.17 L570.0,103.14 L573.0,101.03 L576.0,98.85 L579.0,96.59 L582.0,94.24 L585.0,91.81 L588.0,89.27 L591.0,86.63 L594.0,83.89 L597.0,81.03 L600.0,78.04 L603.0,74.92 L606.0,71.66 L609.0,68.25 L612.0,64.68 L615.0,60.93 L618.0,56.99 L621.0,52.85 L624.0,48.49 L627.0,43.90 L630.0,39.04" stroke="#ff0000" stroke-width="2.3" fill="none"/><path d="M0.0,310.56 L3.0,305.70 L6.0,301.11 L9.0,296.75 L12.0,292.61 L15.0,288.67 L18.0,284.92 L21.0,281.35 L24.0,277.94 L27.0,274.68 L30.0,271.56 L33.0,268.57 L36.0,265.71 L39.0,262.97 L42.0,260.33 L45.0,257.79 L48.0,255.36 L51.0,253.01 L54.0,250.75 L57.0,248.57 L60.0,246.46 L63.0,244.43 L66.0,242.47 L69.0,240.57 L72.0,238.73 L75.0,236.96 L78.0,235.24 L81.0,233.57 L84.0,231.95 L87.0,230.38 L90.0,228.86 L93.0,227.38 L96.0,225.94 L99.0,224.55 L102.0,223.19 L105.0,221.87 L108.0,220.58 L111.0,219.33 L114.0,218.11 L117.0,216.92 L120.0,215.76 L123.0,214.63 L126.0,213.52 L129.0,212.45 L132.0,211.39 L135.0,210.37 L138.0,209.36 L141.0,208.38 L144.0,207.43 L147.0,206.49 L150.0,205.57 L153.0,204.67 L156.0,203.79 L159.0,202.93 L162.0,202.09 L165.0,201.27 L168.0,200.46 L171.0,199.67 L174.0,198.89 L177.0,198.13 L180.0,197.38 L183.0,196.65 L186.0,195.93 L189.0,195.22 L192.0,194.53 L195.0,193.85 L198.0,193.18 L201.0,192.52 L204.0,191.88 L207.0,191.24 L210.0,190.62 L213.0,190.01 L216.0,189.41 L219.0,188.81 L222.0,188.23 L225.0,187.66 L228.0,187.09 L231.0,186.54 L234.0,185.99 L237.0,185.46 L240.0,184.93 L243.0,184.41 L246.0,183.89 L249.0,183.39 L252.0,182.89 L255.0,182.40 L258.0,181.91 L261.0,181.44 L264.0,180.97 L267.0,180.51 L270.0,180.05 L273.0,179.60 L276.0,179.16 L279.0,178.72 L282.0,178.29 L285.0,177.86 L288.0,177.44 L291.0,177.03 L294.0,176.62 L297.0,176.21 L300.0,175.82 L303.0,175.42 L306.0,175.03 L309.0,174.65 L312.0,174.27 L315.0,173.90 L318.0,173.53 L321.0,173.15 L324.0,172.77 L327.0,172.38 L330.0,171.98 L333.0,171.59 L336.0,171.18 L339.0,170.77 L342.0,170.36 L345.0,169.94 L348.0,169.51 L351.0,169.08 L354.0,168.64 L357.0,168.20 L360.0,167.75 L363.0,167.29 L366.0,166.83 L369.0,166.36 L372.0,165.89 L375.0,165.40 L378.0,164.91 L381.0,164.41 L384.0,163.91 L387.0,163.39 L390.0,162.87 L393.0,162.34 L396.0,161.81 L399.0,161.26 L402.0,160.71 L405.0,160.14 L408.0,159.57 L411.0,158.99 L414.0,158.39 L417.0,157.79 L420.0,157.18 L423.0,156.56 L426.0,155.92 L429.0,155.28 L432.0,154.62 L435.0,153.95 L438.0,153.27 L441.0,152.58 L444.0,151.87 L447.0,151.15 L450.0,150.42 L453.0,149.67 L456.0,148.91 L459.0,148.13 L462.0,147.34 L465.0,146.53 L468.0,145.71 L471.0,144.87 L474.0,144.01 L477.0,143.13 L480.0,142.23 L483.0,141.31 L486.0,140.37 L489.0,139.42 L492.0,138.44 L495.0,137.43 L498.0,136.41 L501.0,135.35 L504.0,134.28 L507.0,133.17 L510.0,132.04 L513.0,130.88 L516.0,129.69 L519.0,128.47 L522.0,127.22 L525.0,125.93 L528.0,124.61 L531.0,123.25 L534.0,121.86 L537.0,120.42 L540.0,118.94 L543.0,117.42 L546.0,115.85 L549.0,114.23 L552.0,112.56 L555.0,110.84 L558.0,109.07 L561.0,107.23 L564.0,105.33 L567.0,103.37 L570.0,101.34 L573.0,99.23 L576.0,97.05 L579.0,94.79 L582.0,92.44 L585.0,90.01 L588.0,87.47 L591.0,84.83 L594.0,82.09 L597.0,79.23 L600.0,76.24 L603.0,73.12 L606.0,69.86 L609.0,66.45 L612.0,62.88 L615.0,59.13 L618.0,55.19 L621.0,51.05 L624.0,46.69 L627.0,42.10 L630.0,37.24" stroke="#00ff00" stroke-width="2.3" fill="none"/><path d="M0.0,314.16 L3.0,309.30 L6.0,304.71 L9.0,300.35 L12.0,296.21 L15.0,292.27 L18.0,288.52 L21.0,284.95 L24.0,281.54 L27.0,278.28 L30.0,275.16 L33.0,272.17 L36.0,269.31 L39.0,266.57 L42.0,263.93 L45.0,261.39 L48.0,258.96 L51.0,256.61 L54.0,254.35 L57.0,252.17 L60.0,250.06 L63.0,248.03 L66.0,246.07 L69.0,244.17 L72.0,242.33 L75.0,240.56 L78.0,238.84 L81.0,237.17 L84.0,235.55 L87.0,233.98 L90.0,232.46 L93.0,230.98 L96.0,229.54 L99.0,228.15 L102.0,226.79 L105.0,225.47 L108.0,224.18 L111.0,222.93 L114.0,221.71 L117.0,220.52 L120.0,219.36 L123.0,218.23 L126.0,217.12 L129.0,216.05 L132.0,214.99 L135.0,213.97 L138.0,212.96 L141.0,211.98 L144.0,211.03 L147.0,210.09 L150.0,209.17 L153.0,208.27 L156.0,207.39 L159.0,206.53 L162.0,205.69 L165.0,204.87 L168.0,204.06 L171.0,203.27 L174.0,202.49 L177.0,201.73 L180.0,200.98 L183.0,200.25 L186.0,199.53 L189.0,198.82 L192.0,198.13 L195.0,197.45 L198.0,196.78 L201.0,196.12 L204.0,195.48 L207.0,194.84 L210.0,194.22 L213.0,193.61 L216.0,193.01 L219.0,192.41 L222.0,191.83 L225.0,191.26 L228.0,190.69 L231.0,190.14 L234.0,189.59 L237.0,189.06 L240.0,188.53 L243.0,188.01 L246.0,187.49 L249.0,186.99 L252.0,186.49 L255.0,186.00 L258.0,185.51 L261.0,185.04 L264.0,184.57 L267.0,184.11 L270.0,183.65 L273.0,183.20 L276.0,182.76 L279.0,182.32 L282.0,181.89 L285.0,181.46 L288.0,181.04 L291.0,180.63 L294.0,180.22 L297.0,179.81 L300.0,179.42 L303.0,179.02 L306.0,178.63 L309.0,178.25 L312.0,177.87 L315.0,177.50 L318.0,177.13 L321.0,176.75 L324.0,176.37 L327.0,175.98 L330.0,175.58 L333.0,175.19 L336.0,174.78 L339.0,174.37 L342.0,173.96 L345.0,173.54 L348.0,173.11 L351.0,172.68 L354.0,172.24 L357.0,171.80 L360.0,171.35 L363.0,170.89 L366.0,170.43 L369.0,169.96 L372.0,169.49 L375.0,169.00 L378.0,168.51 L381.0,168.01 L384.0,167.51 L387.0,166.99 L390.0,166.47 L393.0,165.94 L396.0,165.41 L399.0,164.86 L402.0,164.31 L405.0,163.74 L408.0,163.17 L411.0,162.59 L414.0,161.99 L417.0,161.39 L420.0,160.78 L423.0,160.16 L426.0,159.52 L429.0,158.88 L432.0,158.22 L435.0,157.55 L438.0,156.87 L441.0,156.18 L444.0,155.47 L447.0,154.75 L450.0,154.02 L453.0,153.27 L456.0,152.51 L459.0,151.73 L462.0,150.94 L465.0,150.13 L468.0,149.31 L471.0,148.47 L474.0,147.61 L477.0,146.73 L480.0,145.83 L483.0,144.91 L486.0,143.97 L489.0,143.02 L492.0,142.04 L495.0,141.03 L498.0,140.01 L501.0,138.95 L504.0,137.88 L507.0,136.77 L510.0,135.64 L513.0,134.48 L516.0,133.29 L519.0,132.07 L522.0,130.82 L525.0,129.53 L528.0,128.21 L531.0,126.85 L534.0,125.46 L537.0,124.02 L540.0,122.54 L543.0,121.02 L546.0,119.45 L549.0,117.83 L552.0,116.16 L555.0,114.44 L558.0,112.67 L561.0,110.83 L564.0,108.93 L567.0,106.97 L570.0,104.94 L573.0,102.83 L576.0,100.65 L579.0,98.39 L582.0,96.04 L585.0,93.61 L588.0,91.07 L591.0,88.43 L594.0,85.69 L597.0,82.83 L600.0,79.84 L603.0,76.72 L606.0,73.46 L609.0,70.05 L612.0,66.48 L615.0,62.73 L618.0,58.79 L621.0,54.65 L624.0,50.29 L627.0,45.70 L630.0,40.84" stroke="#0000ff" stroke-width="2.3" fill="none"/><ellipse cx="315.0" cy="175.7" rx="10.5" ry="6.5" fill="#7f7fff"/></svg></div>
<div class="a" style="left:559px;top:627.90px;font-size:21.8px;line-height:21.8px;white-space:nowrap;color:#111">600 deg/s</div>
<div class="a" style="left:354px;top:661px;width:88.5px;height:29px;background:#ffcaca;border:1px solid #f7b5b5;border-radius:3px"></div>
<div class="a" style="left:362px;top:665.70px;font-size:21.8px;line-height:21.8px;white-space:nowrap;color:#111">0 deg/s</div>
<div class="a" style="left:354px;top:696px;width:88.5px;height:29px;background:#caf7ca;border:1px solid #b8efb8;border-radius:3px"></div>
<div class="a" style="left:362px;top:700.50px;font-size:21.8px;line-height:21.8px;white-space:nowrap;color:#111">0 deg/s</div>
<div class="a" style="left:354px;top:731px;width:88.5px;height:29px;background:#cacaf7;border:1px solid #b5b5f0;border-radius:3px"></div>
<div class="a" style="left:362px;top:735.30px;font-size:21.8px;line-height:21.8px;white-space:nowrap;color:#111">0 deg/s</div>
<svg class="a" style="left:0;top:0" width="1621" height="982" viewBox="0 0 1621 982"><path d="M932 655.0 L976.5 662.5 L932 669.0 Z" fill="#ffcaca" fill-opacity="0.9"/><path d="M932 685.5 L976.5 662.5 L932 699.5 Z" fill="#caf7ca" fill-opacity="0.9"/><path d="M932 716.0 L976.5 662.5 L932 730.0 Z" fill="#cacaf7" fill-opacity="0.9"/></svg>
<div class="a" style="left:816px;top:647.0px;width:117px;height:29px;background:rgba(255,160,160,.5);border-radius:3px"></div>
<div class="a" style="left:826.5px;top:651.80px;font-size:21.8px;line-height:21.8px;white-space:nowrap;color:#111">467 deg/s</div>
<div class="a" style="left:816px;top:677.5px;width:117px;height:29px;background:rgba(160,255,160,.5);border-radius:3px"></div>
<div class="a" style="left:826.5px;top:682.30px;font-size:21.8px;line-height:21.8px;white-space:nowrap;color:#111">467 deg/s</div>
<div class="a" style="left:816px;top:708.0px;width:117px;height:29px;background:rgba(160,160,255,.5);border-radius:3px"></div>
<div class="a" style="left:826.5px;top:712.80px;font-size:21.8px;line-height:21.8px;white-space:nowrap;color:#111">467 deg/s</div>
<div class="box" style="left:1006px;top:271px;width:604px;height:91px;background:#dedede"><div class="hdr" style="height:41px"></div><div class="a" style="left:299.5px;top:0;width:2px;height:91px;background:#c0c0c0"></div><div class="a" style="left:7px;top:12.00px;font-size:18px;line-height:18px;white-space:nowrap;color:#fff">TPA</div><div class="a" style="left:308.5px;top:12.00px;font-size:18px;line-height:18px;white-space:nowrap;color:#fff">TPA Breakpoint</div><div class="inp" style="left:13.5px;top:48.3px;width:273px;height:33px"><div class="a" style="right:30.5px;top:6.10px;font-size:19.6px;line-height:19.6px;white-space:nowrap;">0,65</div><div class="sp"><svg class="a" style="left:5.2px;top:6.1px;overflow:visible" width="12" height="21" viewBox="0 0 12 21"><g transform="scale(0.9)"><path d="M0.4 6.1 L5.9 0 L11.4 6.1 Z M0.4 14.2 L5.9 20.3 L11.4 14.2 Z" fill="#4f4f4f"/></g></svg></div></div><div class="inp" style="left:314.5px;top:48.5px;width:273px;height:33px"><div class="a" style="right:30.5px;top:6.10px;font-size:19.6px;line-height:19.6px;white-space:nowrap;">1350</div><div class="sp"><svg class="a" style="left:5.2px;top:6.1px;overflow:visible" width="12" height="21" viewBox="0 0 12 21"><g transform="scale(0.9)"><path d="M0.4 6.1 L5.9 0 L11.4 6.1 Z M0.4 14.2 L5.9 20.3 L11.4 14.2 Z" fill="#4f4f4f"/></g></svg></div></div></div>
<div class="box" style="left:1006px;top:370px;width:604px;height:90px;background:#dedede"><div class="hdr" style="height:41px"></div><div class="a" style="left:299.5px;top:0;width:2px;height:90px;background:#c0c0c0"></div><div class="a" style="left:7px;top:11.80px;font-size:18px;line-height:18px;white-space:nowrap;color:#fff">Throttle Limit</div><div class="a" style="left:308.5px;top:11.80px;font-size:18px;line-height:18px;white-space:nowrap;color:#fff">Throttle Limit %</div><div class="help" style="left:263.5px;top:10.2px">?</div><div class="help" style="left:564.5px;top:10.2px">?</div><div class="sel-box" style="left:13.5px;top:50px;width:270px;height:27px"><div class="a" style="right:28px;top:2.70px;font-size:19.8px;line-height:19.8px;white-space:nowrap;">OFF</div><svg class="a" style="left:248px;top:8.3px" width="14" height="9" viewBox="0 0 14 9"><path d="M1.2 1.2 L6.9 6.9 L12.6 1.2" stroke="#000" stroke-width="2.2" fill="none"/></svg></div><div class="inp" style="left:314.5px;top:49.0px;width:273px;height:32px"><div class="a" style="right:30.5px;top:4.80px;font-size:19.6px;line-height:19.6px;white-space:nowrap;">100</div><div class="sp"><svg class="a" style="left:5.2px;top:6.1px;overflow:visible" width="12" height="21" viewBox="0 0 12 21"><g transform="scale(0.9)"><path d="M0.4 6.1 L5.9 0 L11.4 6.1 Z M0.4 14.2 L5.9 20.3 L11.4 14.2 Z" fill="#4f4f4f"/></g></svg></div></div></div>
<div class="box" style="left:1006px;top:468px;width:604px;height:91px;background:#dedede"><div class="hdr" style="height:40px"></div><div class="a" style="left:299.5px;top:0;width:2px;height:91px;background:#c0c0c0"></div><div class="a" style="left:7px;top:12.00px;font-size:18px;line-height:18px;white-space:nowrap;color:#fff">Throttle MID</div><div class="a" style="left:308.5px;top:12.00px;font-size:18px;line-height:18px;white-space:nowrap;color:#fff">Throttle EXPO</div><div class="inp" style="left:13.5px;top:48.3px;width:273px;height:33px"><div class="a" style="right:30.5px;top:5.90px;font-size:19.6px;line-height:19.6px;white-space:nowrap;">0,60</div><div class="sp"><svg class="a" style="left:5.2px;top:6.1px;overflow:visible" width="12" height="21" viewBox="0 0 12 21"><g transform="scale(0.9)"><path d="M0.4 6.1 L5.9 0 L11.4 6.1 Z M0.4 14.2 L5.9 20.3 L11.4 14.2 Z" fill="#4f4f4f"/></g></svg></div></div><div class="inp" style="left:314.5px;top:48.5px;width:273px;height:33px"><div class="a" style="right:30.5px;top:5.90px;font-size:19.6px;line-height:19.6px;white-space:nowrap;">0,20</div><div class="sp"><svg class="a" style="left:5.2px;top:6.1px;overflow:visible" width="12" height="21" viewBox="0 0 12 21"><g transform="scale(0.9)"><path d="M0.4 6.1 L5.9 0 L11.4 6.1 Z M0.4 14.2 L5.9 20.3 L11.4 14.2 Z" fill="#4f4f4f"/></g></svg></div></div></div>
<div class="box" style="left:1006px;top:566px;width:604px;height:289px;background:#f9f9f9"><div class="hdr" style="height:41px"><div class="a" style="left:8px;top:11.80px;font-size:18.4px;line-height:18.4px;white-space:nowrap;">Throttle Curve Preview</div></div><svg class="a" style="left:0;top:41px;background:#fbfbfb" width="601" height="245.5" viewBox="0 0 601 245.5"><path d="M0.10 0 V245.5" stroke="#f2f2f2" stroke-width="1"/><path d="M15.13 0 V245.5" stroke="#f2f2f2" stroke-width="1"/><path d="M30.16 0 V245.5" stroke="#f2f2f2" stroke-width="1"/><path d="M45.19 0 V245.5" stroke="#f2f2f2" stroke-width="1"/><path d="M60.22 0 V245.5" stroke="#f2f2f2" stroke-width="1"/><path d="M75.25 0 V245.5" stroke="#f2f2f2" stroke-width="1"/><path d="M90.28 0 V245.5" stroke="#f2f2f2" stroke-width="1"/><path d="M105.31 0 V245.5" stroke="#f2f2f2" stroke-width="1"/><path d="M120.34 0 V245.5" stroke="#f2f2f2" stroke-width="1"/><path d="M135.37 0 V245.5" stroke="#f2f2f2" stroke-width="1"/><path d="M150.40 0 V245.5" stroke="#f2f2f2" stroke-width="1"/><path d="M165.43 0 V245.5" stroke="#f2f2f2" stroke-width="1"/><path d="M180.46 0 V245.5" stroke="#f2f2f2" stroke-width="1"/><path d="M195.49 0 V245.5" stroke="#f2f2f2" stroke-width="1"/><path d="M210.52 0 V245.5" stroke="#f2f2f2" stroke-width="1"/><path d="M225.55 0 V245.5" stroke="#f2f2f2" stroke-width="1"/><path d="M240.58 0 V245.5" stroke="#f2f2f2" stroke-width="1"/><path d="M255.61 0 V245.5" stroke="#f2f2f2" stroke-width="1"/><path d="M270.64 0 V245.5" stroke="#f2f2f2" stroke-width="1"/><path d="M285.67 0 V245.5" stroke="#f2f2f2" stroke-width="1"/><path d="M300.70 0 V245.5" stroke="#f2f2f2" stroke-width="1"/><path d="M315.73 0 V245.5" stroke="#f2f2f2" stroke-width="1"/><path d="M330.76 0 V245.5" stroke="#f2f2f2" stroke-width="1"/><path d="M345.79 0 V245.5" stroke="#f2f2f2" stroke-width="1"/><path d="M360.82 0 V245.5" stroke="#f2f2f2" stroke-width="1"/><path d="M375.85 0 V245.5" stroke="#f2f2f2" stroke-width="1"/><path d="M390.88 0 V245.5" stroke="#f2f2f2" stroke-width="1"/><path d="M405.91 0 V245.5" stroke="#f2f2f2" stroke-width="1"/><path d="M420.94 0 V245.5" stroke="#f2f2f2" stroke-width="1"/><path d="M435.97 0 V245.5" stroke="#f2f2f2" stroke-width="1"/><path d="M451.00 0 V245.5" stroke="#f2f2f2" stroke-width="1"/><path d="M466.03 0 V245.5" stroke="#f2f2f2" stroke-width="1"/><path d="M481.06 0 V245.5" stroke="#f2f2f2" stroke-width="1"/><path d="M496.09 0 V245.5" stroke="#f2f2f2" stroke-width="1"/><path d="M511.12 0 V245.5" stroke="#f2f2f2" stroke-width="1"/><path d="M526.15 0 V245.5" stroke="#f2f2f2" stroke-width="1"/><path d="M541.18 0 V245.5" stroke="#f2f2f2" stroke-width="1"/><path d="M556.21 0 V245.5" stroke="#f2f2f2" stroke-width="1"/><path d="M571.24 0 V245.5" stroke="#f2f2f2" stroke-width="1"/><path d="M586.27 0 V245.5" stroke="#f2f2f2" stroke-width="1"/><path d="M0 2.68 H601" stroke="#f2f2f2" stroke-width="1"/><path d="M0 17.72 H601" stroke="#f2f2f2" stroke-width="1"/><path d="M0 32.76 H601" stroke="#f2f2f2" stroke-width="1"/><path d="M0 47.80 H601" stroke="#f2f2f2" stroke-width="1"/><path d="M0 62.84 H601" stroke="#f2f2f2" stroke-width="1"/><path d="M0 77.88 H601" stroke="#f2f2f2" stroke-width="1"/><path d="M0 92.92 H601" stroke="#f2f2f2" stroke-width="1"/><path d="M0 107.96 H601" stroke="#f2f2f2" stroke-width="1"/><path d="M0 123.00 H601" stroke="#f2f2f2" stroke-width="1"/><path d="M0 138.04 H601" stroke="#f2f2f2" stroke-width="1"/><path d="M0 153.08 H601" stroke="#f2f2f2" stroke-width="1"/><path d="M0 168.12 H601" stroke="#f2f2f2" stroke-width="1"/><path d="M0 183.16 H601" stroke="#f2f2f2" stroke-width="1"/><path d="M0 198.20 H601" stroke="#f2f2f2" stroke-width="1"/><path d="M0 213.24 H601" stroke="#f2f2f2" stroke-width="1"/><path d="M0 228.28 H601" stroke="#f2f2f2" stroke-width="1"/><path d="M0 243.32 H601" stroke="#f2f2f2" stroke-width="1"/><path d="M150.5 0 V245.5" stroke="#e4e4e4" stroke-width="1.4"/><path d="M300.7 0 V245.5" stroke="#e4e4e4" stroke-width="1.4"/><path d="M451 0 V245.5" stroke="#e4e4e4" stroke-width="1.4"/><path d="M0 123 H601" stroke="#e8e8e8" stroke-width="1.4"/><path d="M0 245.5 Q180.30 157.12 360.60 98.20 Q480.80 58.92 601 0" stroke="#ffbb00" stroke-width="3" fill="none"/></svg><div class="a" style="left:8.5px;top:46.50px;font-size:20px;line-height:20px;white-space:nowrap;color:#4a4a4a;white-space:pre;letter-spacing:2.55px">0% = 0%</div></div>
</body></html>
